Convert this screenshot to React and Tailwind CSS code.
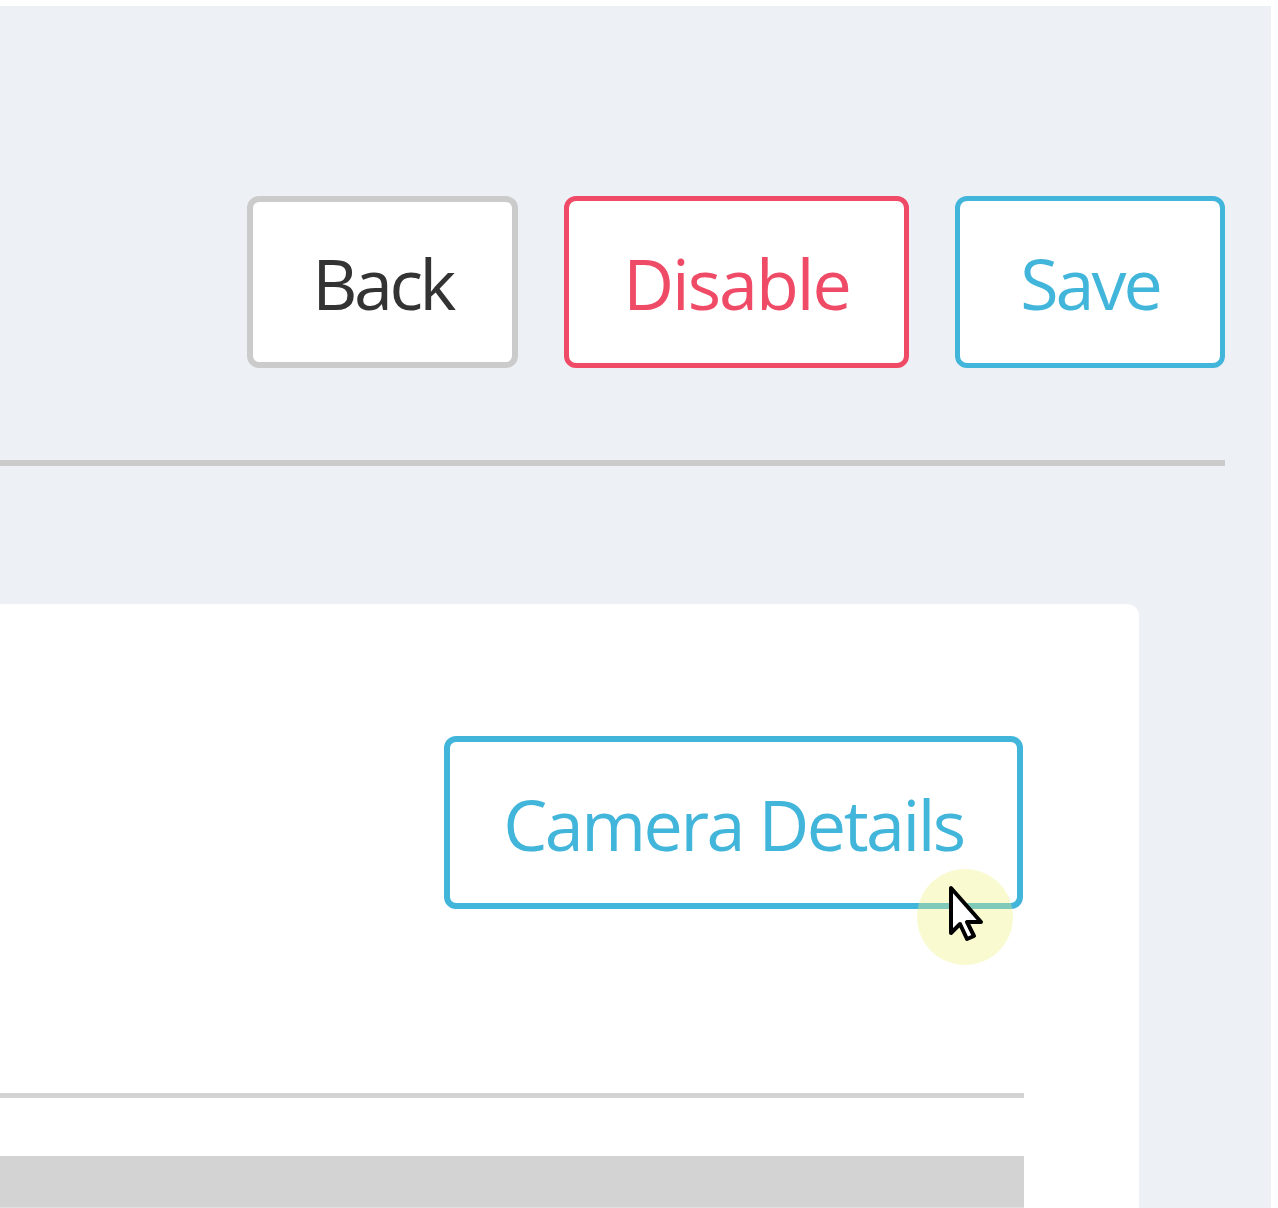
import React from "react";

const font = { fontFamily: '"Open Sans", "Noto Sans", sans-serif' };

export default function App() {
  return (
    <div className="min-h-[1208px] bg-white pt-[6px] pr-[7px]" style={font}>
      <div className="h-[1202px] bg-[#edf0f5] flex flex-col overflow-hidden">
        {/* header buttons */}
        <div className="pt-[190px] pr-[46px] flex justify-end gap-[46px]">
          <button className="w-[271px] h-[172px] border-[6px] border-[#cbcbcb] rounded-[12px] bg-white flex items-center justify-center text-[70px] leading-none tracking-[-3.5px] text-[#333333]">
            <span className="pt-[2px]">Back</span>
          </button>
          <button className="w-[345px] h-[172px] border-[5px] border-[#ef4a66] rounded-[12px] bg-white flex items-center justify-center text-[70px] leading-none tracking-[-2px] text-[#ef4a66]">
            <span className="pt-[2px]">Disable</span>
          </button>
          <button className="w-[270px] h-[172px] border-[5px] border-[#42b5da] rounded-[12px] bg-white flex items-center justify-center text-[70px] leading-none tracking-[-3px] text-[#42b5da]">
            <span className="pt-[2px]">Save</span>
          </button>
        </div>
        <div className="mt-[92px] mr-[46px] h-[6px] bg-[#cbcbcb]" />
        {/* card */}
        <div className="mt-[138px] w-[1139px] flex-1 bg-white rounded-tr-[12px] flex flex-col pt-[132px]">
          <div className="flex justify-end pr-[116px]">
            <div className="relative">
              <button className="w-[579px] h-[173px] border-[6px] border-[#42b5da] rounded-[12px] bg-white flex items-center justify-center text-[70px] leading-none tracking-[-2.5px] text-[#42b5da]">
                <span className="pt-[2px]">Camera Details</span>
              </button>
              {/* cursor highlight */}
              <div className="absolute left-[473px] top-[133px] w-[96px] h-[96px] rounded-full bg-[rgba(241,241,128,0.36)]" />
              <svg
                className="absolute left-[504px] top-[149px]"
                width="40"
                height="60"
                viewBox="-3 -3 40 60"
              >
                <path
                  d="M0 0 L0 45 L9 36 L16 51 L23 48 L16 34 L30 34 Z"
                  fill="white"
                  stroke="black"
                  strokeWidth="4"
                  strokeLinejoin="round"
                />
              </svg>
            </div>
          </div>
          <div className="mt-[184px] mr-[115px] h-[5px] bg-[#d3d3d3]" />
          <div className="mt-[58px] mr-[115px] h-[52px] bg-[#d3d3d3] border-b border-[#e0e0e0]" />
        </div>
      </div>
    </div>
  );
}
